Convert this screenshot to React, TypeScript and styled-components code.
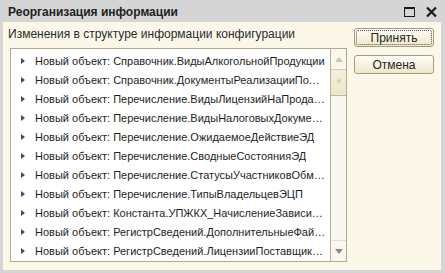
import React from "react";
import styled, { createGlobalStyle } from "styled-components";

const Global = createGlobalStyle`
  html, body { margin: 0; padding: 0; background: #d5d5d5; }
  * { box-sizing: border-box; }
`;

const Window = styled.div`
  width: 445px;
  height: 273px;
  background: #d5d5d5;
  display: flex;
  flex-direction: column;
  font-family: "Liberation Sans", Arial, sans-serif;
  overflow: hidden;
`;

const TitleBar = styled.div`
  height: 22px;
  display: flex;
  align-items: center;
  padding: 0 8px 0 8px;
`;

const Title = styled.div`
  flex: 1;
  font-weight: bold;
  font-size: 12px;
  color: #1f1f1f;
  padding-top: 2px;
`;

const Controls = styled.div`
  display: flex;
  align-items: center;
  gap: 11px;
  padding-top: 2px;
`;

const MaxBox = styled.div`
  width: 11px;
  height: 10px;
  border: 1px solid #1a1a1a;
  border-top-width: 2px;
`;

const Body = styled.div`
  flex: 1;
  margin: 0 4px 3px 3px;
  background: #fbf8ea;
  display: grid;
  grid-template-columns: minmax(0, 1fr) 80px;
  column-gap: 7px;
  padding: 0 7px 0 7px;
`;

const Left = styled.div`
  display: flex;
  flex-direction: column;
  padding-top: 5px;
  min-width: 0;
`;

const Label = styled.div`
  font-size: 12px;
  color: #2a2a2a;
  height: 15px;
  line-height: 15px;
  margin-left: -2px;
`;

const ListBox = styled.div`
  margin-top: 6px;
  height: 214px;
  border: 1px solid #b3ab8c;
  background: #ffffff;
  display: flex;
`;

const Rows = styled.div`
  flex: 1;
  min-width: 0;
  padding-top: 2px;
`;

const Row = styled.div`
  height: 19px;
  display: flex;
  align-items: center;
  padding-left: 10px;
  padding-right: 4px;
`;

const Arrow = styled.span`
  width: 0;
  height: 0;
  border-top: 3.5px solid transparent;
  border-bottom: 3.5px solid transparent;
  border-left: 4px solid #34506e;
  flex: none;
  margin-right: 10px;
`;

const RowText = styled.span`
  font-size: 11px;
  color: #1e1e1e;
  white-space: nowrap;
  overflow: hidden;
  text-overflow: ellipsis;
  min-width: 0;
`;

const ScrollBar = styled.div`
  width: 16px;
  flex: none;
  border-left: 1px solid #b9b297;
  background: #f8f7f1;
  display: flex;
  flex-direction: column;
`;

const ScrollBtn = styled.div<{ $top?: boolean }>`
  height: 21px;
  display: flex;
  align-items: center;
  justify-content: center;
  background: #f9f7ee;
  ${(p) => (p.$top ? "border-bottom: 1px solid #d2ccb4;" : "border-top: 1px solid #e4dfcc;")}
`;

const Tri = styled.span<{ $up?: boolean }>`
  width: 0;
  height: 0;
  border-left: 4px solid transparent;
  border-right: 4px solid transparent;
  ${(p) =>
    p.$up
      ? "border-bottom: 5px solid #c9c5b5;"
      : "border-top: 5px solid #8d8b84;"}
`;

const Thumb = styled.div`
  height: 26px;
  background: linear-gradient(to bottom, #f3efdc, #ebe5c9);
  border-bottom: 1px solid #bfb89b;
  display: flex;
  justify-content: center;
  padding-top: 9px;
`;

const Grip = styled.span`
  width: 4px;
  height: 4px;
  border-radius: 50%;
  background: #d6d0b8;
`;

const Track = styled.div`
  flex: 1;
`;

const Right = styled.div`
  display: flex;
  flex-direction: column;
  gap: 8px;
  padding-top: 6px;
`;

const Button = styled.div<{ $focus?: boolean }>`
  height: 19px;
  border: 1px solid #a49b78;
  border-radius: 3px;
  background: linear-gradient(to bottom, #fefdf8 0%, #f7f3e2 50%, #ede7cb 100%);
  display: flex;
  align-items: center;
  justify-content: center;
  font-size: 12px;
  color: #262626;
  position: relative;
  ${(p) =>
    p.$focus
      ? `&::after { content: ""; position: absolute; inset: 1px; border: 1px dotted #555; border-radius: 2px; }`
      : ""}
`;

const items = [
  "Новый объект: Справочник.ВидыАлкогольнойПродукции",
  "Новый объект: Справочник.ДокументыРеализацииПолномочий",
  "Новый объект: Перечисление.ВидыЛицензийНаПродажуАлкоголя",
  "Новый объект: Перечисление.ВидыНалоговыхДокументов",
  "Новый объект: Перечисление.ОжидаемоеДействиеЭД",
  "Новый объект: Перечисление.СводныеСостоянияЭД",
  "Новый объект: Перечисление.СтатусыУчастниковОбмена",
  "Новый объект: Перечисление.ТипыВладельцевЭЦП",
  "Новый объект: Константа.УПЖКХ_НачислениеЗависимыхУслуг",
  "Новый объект: РегистрСведений.ДополнительныеФайлы",
  "Новый объект: РегистрСведений.ЛицензииПоставщиковАлкоголя",
];

export default function App() {
  return (
    <>
      <Global />
      <Window>
        <TitleBar>
          <Title>Реорганизация информации</Title>
          <Controls>
            <MaxBox />
            <svg width="11" height="10" viewBox="0 0 11 10">
              <path d="M1 0.5 L10 9.5 M10 0.5 L1 9.5" stroke="#1a1a1a" strokeWidth="2.2" />
            </svg>
          </Controls>
        </TitleBar>
        <Body>
          <Left>
            <Label>Изменения в структуре информации конфигурации</Label>
            <ListBox>
              <Rows>
                {items.map((t) => (
                  <Row key={t}>
                    <Arrow />
                    <RowText>{t}</RowText>
                  </Row>
                ))}
              </Rows>
              <ScrollBar>
                <ScrollBtn $top>
                  <Tri $up />
                </ScrollBtn>
                <Thumb>
                  <Grip />
                </Thumb>
                <Track />
                <ScrollBtn>
                  <Tri />
                </ScrollBtn>
              </ScrollBar>
            </ListBox>
          </Left>
          <Right>
            <Button $focus>Принять</Button>
            <Button>Отмена</Button>
          </Right>
        </Body>
      </Window>
    </>
  );
}
